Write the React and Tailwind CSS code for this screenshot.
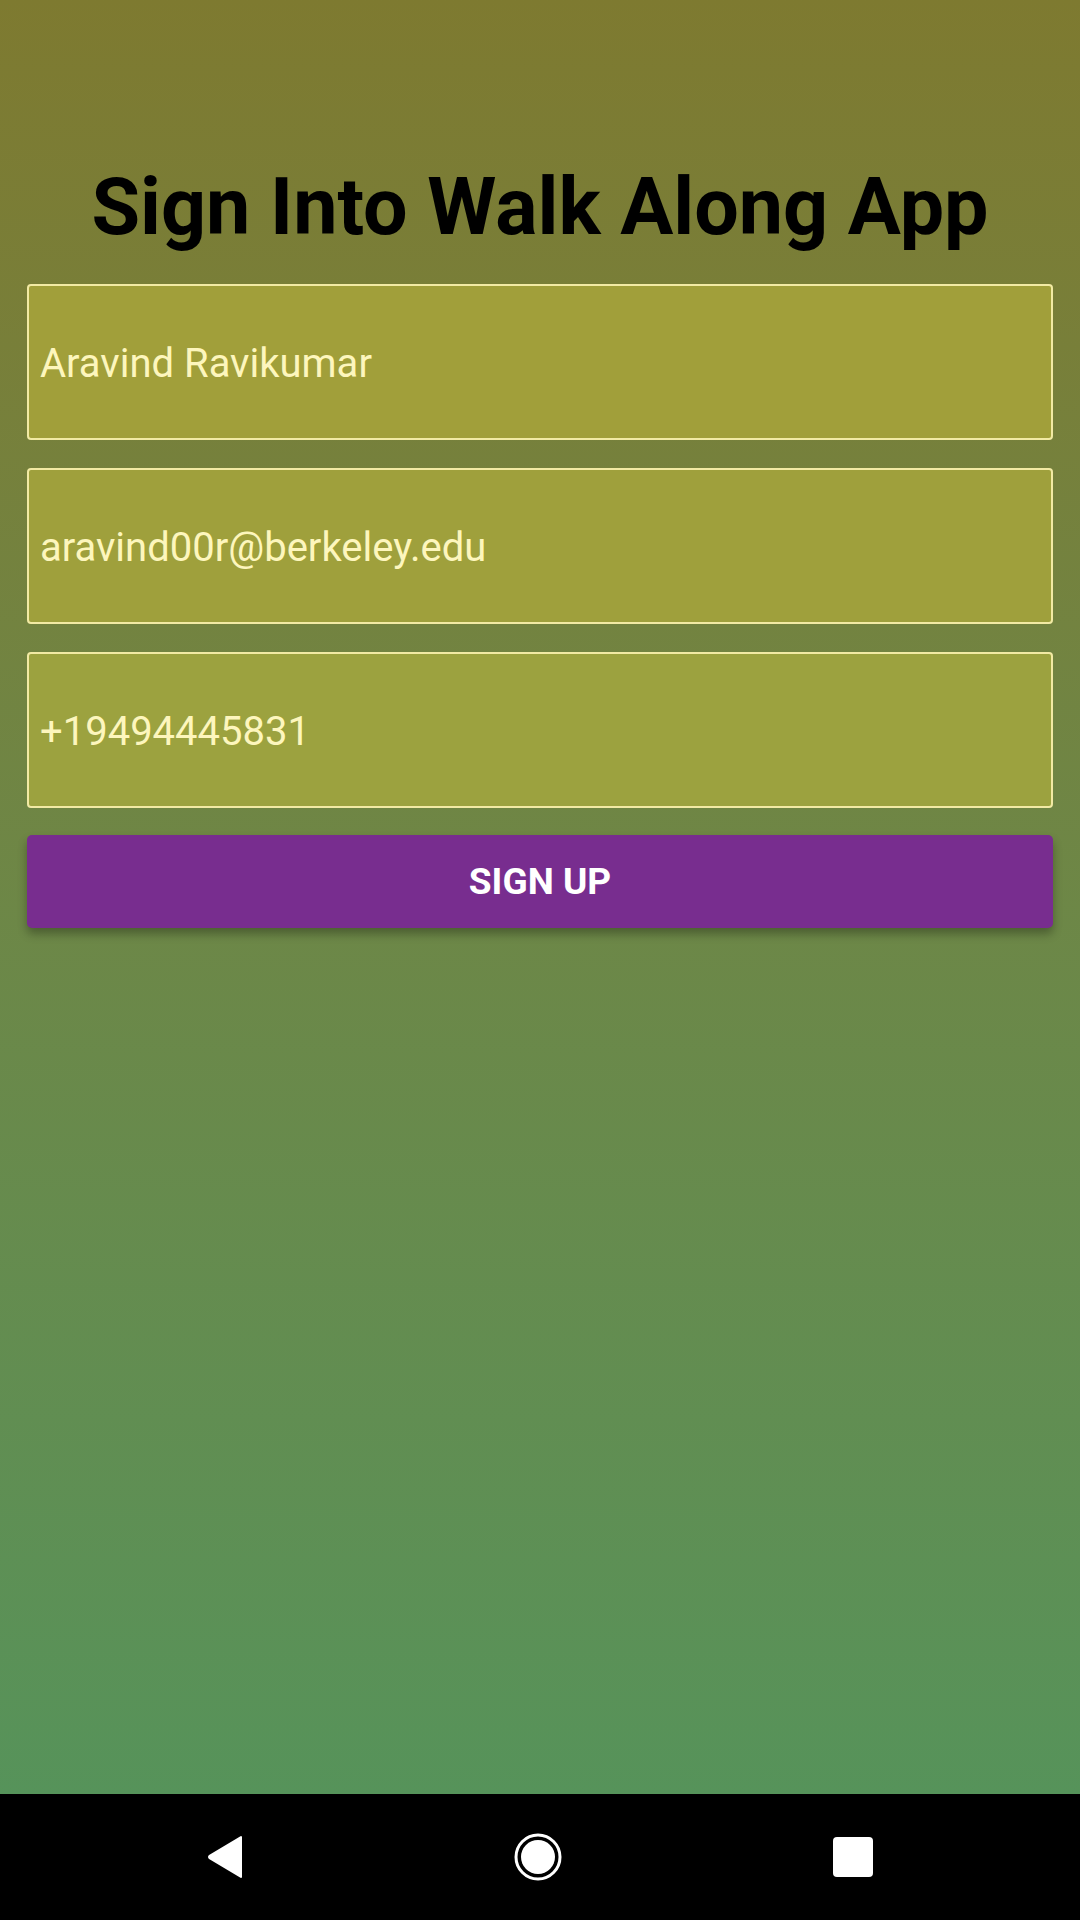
import React from 'react';

const FIELDS = [
  { id: 'name', value: 'Aravind Ravikumar', bg: 'bg-[#a19f3a]' },
  { id: 'email', value: 'aravind00r@berkeley.edu', bg: 'bg-[#9fa03c]' },
  { id: 'phone', value: '+19494445831', bg: 'bg-[#9ca23f]' },
];

function NavBar() {
  return (
    <div className="flex h-[126px] shrink-0 items-center justify-between bg-black px-[207px]">
      <svg width="36" height="44" viewBox="0 0 36 44" aria-hidden>
        <path d="M34 2 L34 42 L3 23.5 Q1 22 3 20.5 Z" fill="white" stroke="white" strokeWidth="2" strokeLinejoin="round" />
      </svg>
      <svg width="48" height="48" viewBox="0 0 48 48" aria-hidden>
        <circle cx="24" cy="24" r="22" fill="none" stroke="white" strokeWidth="3" />
        <circle cx="24" cy="24" r="17" fill="white" />
      </svg>
      <div className="h-[40px] w-[40px] rounded-[4px] bg-white" />
    </div>
  );
}

export default function App() {
  return (
    <div
      className="flex h-[1920px] w-[1080px] flex-col overflow-hidden"
      style={{ fontFamily: 'Roboto, "Noto Sans", sans-serif' }}
    >
      {/* main */}
      <div className="flex flex-1 flex-col bg-gradient-to-b from-[#7e7a30] to-[#56935a] px-[27px] pt-[168px]">
        <h1 className="text-center text-[79px] font-bold leading-none text-black">
          Sign Into Walk Along App
        </h1>

        <div className="mt-[37px] flex flex-col gap-[28px]">
          {FIELDS.map((f) => (
            <div
              key={f.id}
              className={`flex h-[156px] items-center rounded-[4px] border-2 border-[#f2eaa4] px-[11px] pt-[4px] ${f.bg}`}
            >
              <span className="text-[40px] leading-none text-[#fdf6bd]">{f.value}</span>
            </div>
          ))}
        </div>

        <button
          type="button"
          className="mt-[27px] flex h-[93px] items-center justify-center rounded-[5px] bg-[#782d8f] text-[37px] font-bold uppercase leading-none text-white shadow-[0_6px_10px_rgba(0,0,0,0.3)]"
        >
          Sign Up
        </button>
      </div>

      <NavBar />
    </div>
  );
}
